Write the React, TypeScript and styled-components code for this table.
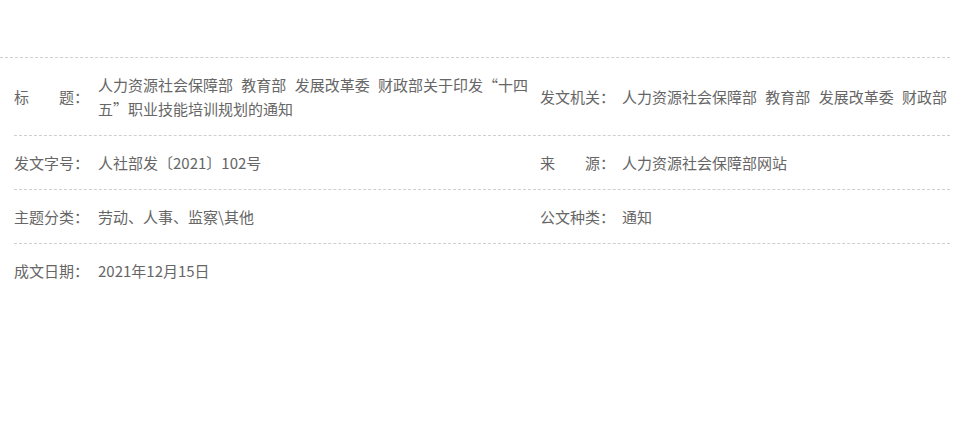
import React from 'react'
import styled, { createGlobalStyle } from 'styled-components'

const GlobalStyle = createGlobalStyle`
    html, body {
        overflow-x: hidden;
    }

    body {
        margin: 0;
        background: #fff;
        font-family: 'Noto Sans CJK SC', 'Noto Sans', sans-serif;
    }
`

const InfoTable = styled.div`
    margin-top: 57px;
    width: 950px;
    border-top: 1px dashed #cfcfcf;
`

const Row = styled.div`
    margin-left: 14px;
    display: grid;
    grid-template-columns: 526px 1fr;
    align-items: center;
    padding: 15px 0 14px;
    border-bottom: 1px dashed #cfcfcf;

    &:last-child {
        border-bottom: none;
    }
`

const Cell = styled.div`
    display: flex;
    align-items: center;
    font-size: 15px;
    line-height: 24px;
    color: #666;
`

const Label = styled.span<{ $width: number }>`
    flex: none;
    width: ${p => p.$width}px;
    white-space: pre;
`

const Value = styled.span<{ $nowrap?: boolean }>`
    flex: 1;
    word-spacing: 5px;
    white-space: ${p => (p.$nowrap ? 'nowrap' : 'normal')};
`

type Field = {
    label: string;
    value: string;
}

const rows: Field[][] = [
    [
        { label: '标　　题：', value: '人力资源社会保障部 教育部 发展改革委 财政部关于印发“十四五”职业技能培训规划的通知' },
        { label: '发文机关：', value: '人力资源社会保障部 教育部 发展改革委 财政部' },
    ],
    [
        { label: '发文字号：', value: '人社部发〔2021〕102号' },
        { label: '来　　源：', value: '人力资源社会保障部网站' },
    ],
    [
        { label: '主题分类：', value: '劳动、人事、监察\\其他' },
        { label: '公文种类：', value: '通知' },
    ],
    [
        { label: '成文日期：', value: '2021年12月15日' },
    ],
]

export default function App() {
    return (
        <>
            <GlobalStyle />
            <InfoTable>
                {rows.map((row, i) => (
                    <Row key={i}>
                        {row.map((field, j) => (
                            <Cell key={j}>
                                <Label $width={j === 0 ? 84 : 82}>{field.label}</Label>
                                <Value $nowrap={j === 1}>{field.value}</Value>
                            </Cell>
                        ))}
                    </Row>
                ))}
            </InfoTable>
        </>
    )
}
